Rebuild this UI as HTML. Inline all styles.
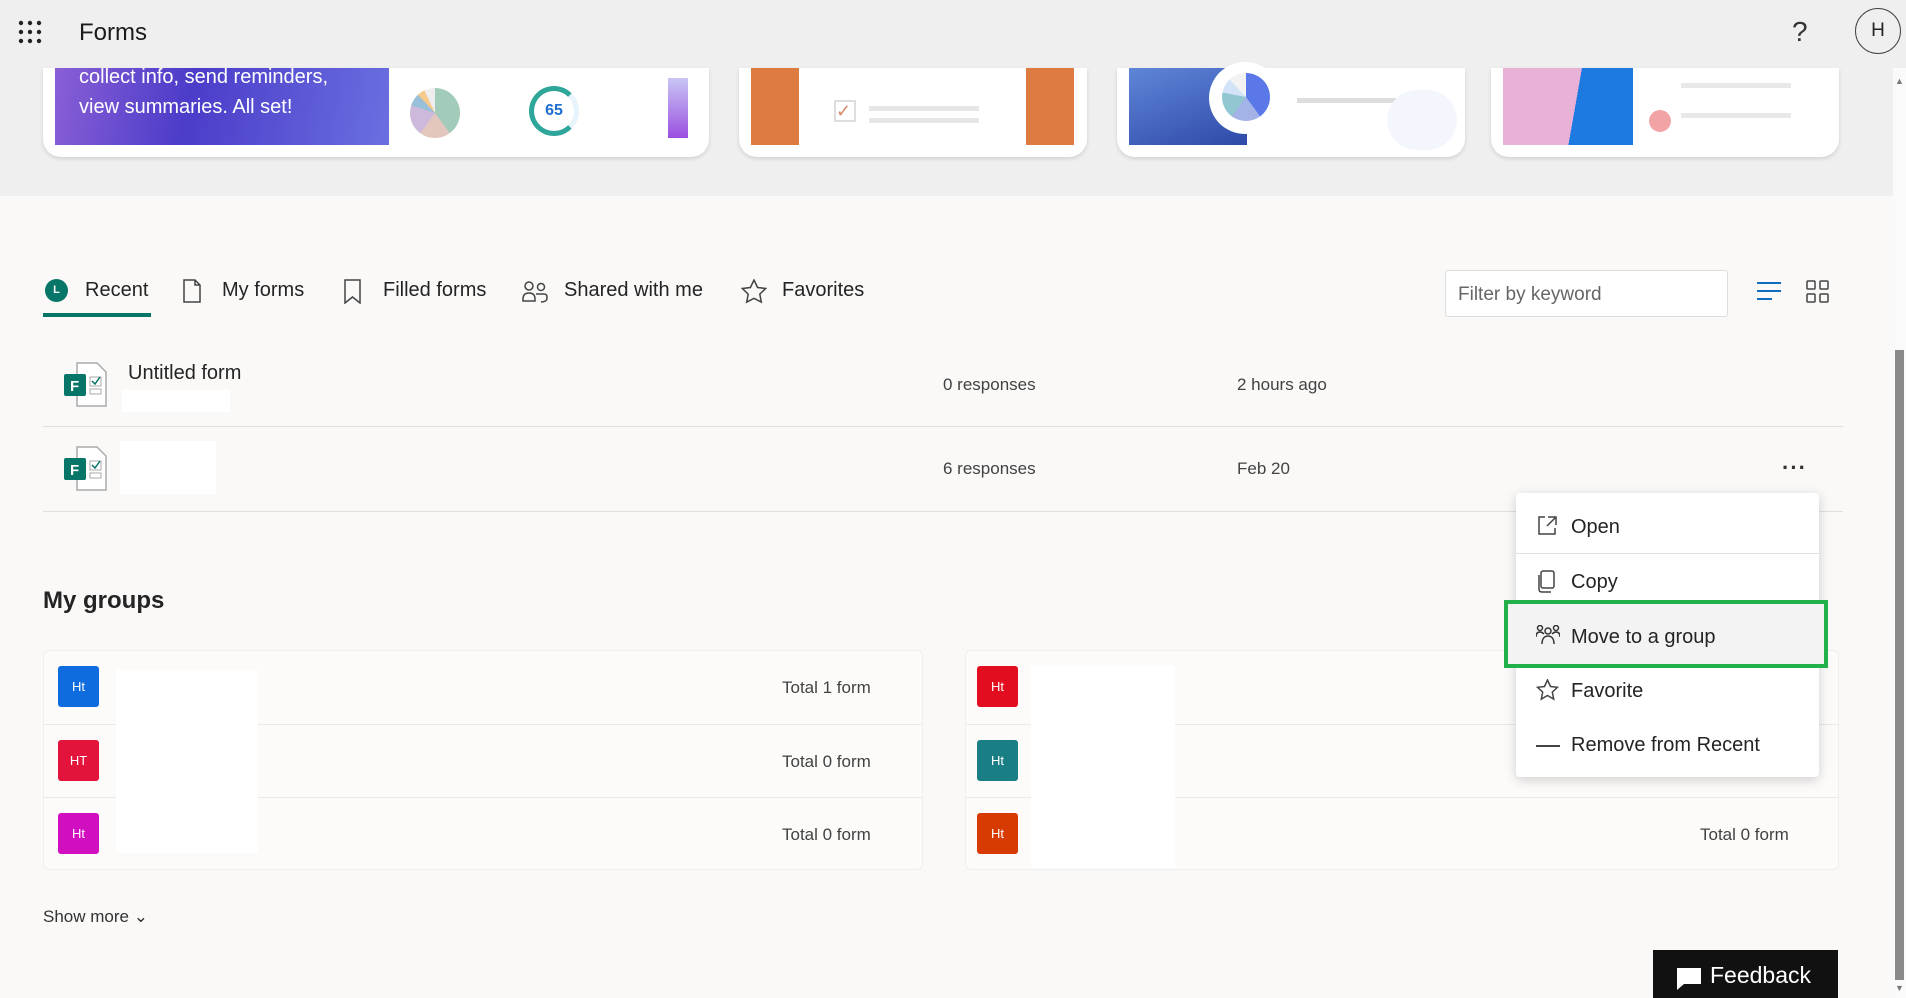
<!DOCTYPE html>
<html><head><style>
*{margin:0;padding:0;box-sizing:border-box}
body{width:1906px;height:998px;overflow:hidden;background:#faf9f8;font-family:"Liberation Sans",Arial,sans-serif;color:#242424;position:relative}
.a{position:absolute}
.hdr{left:0;top:0;width:1906px;height:196px;background:#efefef}
.card{background:#fff;border-radius:0 0 18px 18px;box-shadow:0 2px 4px rgba(0,0,0,.12);top:68px;height:89px}
.inner{position:absolute;top:0;height:77px;overflow:hidden}
.t{font-size:20px;top:279px;color:#242424}
.row{font-size:17px;color:#424242}
.grp{background:#fcfbfa;border:1px solid #f0efee;border-radius:6px}
.badge{width:41px;height:41px;border-radius:3px;color:#fff;font-size:13px;text-align:center;line-height:41px}
.mi{left:1571px;font-size:20px;color:#242424}
.ic{left:1536px}
</style></head><body>
<div class="a hdr"></div>
<!-- waffle -->
<svg class="a" style="left:18px;top:20px" width="24" height="24"><g fill="#222"><circle cx="3" cy="3" r="2.2"/><circle cx="12" cy="3" r="2.2"/><circle cx="21" cy="3" r="2.2"/><circle cx="3" cy="12" r="2.2"/><circle cx="12" cy="12" r="2.2"/><circle cx="21" cy="12" r="2.2"/><circle cx="3" cy="21" r="2.2"/><circle cx="12" cy="21" r="2.2"/><circle cx="21" cy="21" r="2.2"/></g></svg>
<div class="a" style="left:79px;top:19px;font-size:24px;color:#1b1b1b">Forms</div>
<div class="a" style="left:1792px;top:16px;font-size:28px;color:#333;font-weight:300">?</div>
<div class="a" style="left:1855px;top:8px;width:46px;height:46px;border:1px solid #444;border-radius:50%;text-align:center;line-height:44px;font-size:19px">H</div>

<div class="a card" style="left:43px;width:666px">
 <div class="inner" style="left:12px;width:334px;background:linear-gradient(100deg,#8a5fd6,#4b3cc9 40%,#6a6fe0)"></div>
 <div class="a" style="left:36px;top:-6px;color:#fff;font-size:20px;line-height:30px">collect info, send reminders,<br>view summaries. All set!</div>
 <div class="a" style="left:367px;top:20px;width:50px;height:50px;border-radius:50%;background:conic-gradient(#a3cbb9 0 40%,#e3c6bd 0 60%,#cdb9dc 0 80%,#98c0d8 0 88%,#f6c98d 0 93%,#eee 0)"></div>
 <div class="a" style="left:486px;top:18px;width:50px;height:50px;border-radius:50%;border:5px solid #2ea69a;border-right-color:#e8f4fb;text-align:center;line-height:40px;color:#1e6fd0;font-size:16px;font-weight:bold">65</div>
 <div class="a" style="left:625px;top:10px;width:20px;height:60px;background:linear-gradient(#c9c6f5,#9a4fe0)"></div>
</div>
<div class="a card" style="left:739px;width:348px">
 <div class="inner" style="left:12px;width:48px;background:#de7b41"></div>
 <div class="inner" style="left:287px;width:48px;background:#de7b41"></div>
 <div class="a" style="left:95px;top:32px;width:22px;height:22px;border:2px solid #ddd;color:#d98a6a;font-size:18px;line-height:18px">✓</div>
 <div class="a" style="left:130px;top:38px;width:110px;height:5px;background:#e6e6e6"></div>
 <div class="a" style="left:130px;top:50px;width:110px;height:5px;background:#e6e6e6"></div>
</div>
<div class="a card" style="left:1117px;width:348px">
 <div class="inner" style="left:12px;width:118px;background:linear-gradient(160deg,#5f86d8,#2f4aa8)"></div>
 <div class="a" style="left:92px;top:-6px;width:72px;height:72px;border-radius:50%;background:#fff"></div>
 <div class="a" style="left:105px;top:5px;width:48px;height:48px;border-radius:50%;background:conic-gradient(#5a78e8 0 40%,#a3b3e8 0 60%,#91c7d1 0 78%,#d2e3f7 0 88%,#f2f2f2 0)"></div>
 <div class="a" style="left:180px;top:30px;width:100px;height:5px;background:#ddd"></div>
 <div class="a" style="left:270px;top:22px;width:70px;height:60px;border-radius:35px;background:#f3f6fd"></div>
</div>
<div class="a card" style="left:1491px;width:348px">
 <div class="inner" style="left:12px;width:130px;background:linear-gradient(100deg,#eab1d6 55%,#1c7ae0 55%)"></div>
 <div class="a" style="left:158px;top:42px;width:22px;height:22px;border-radius:50%;background:#f2a3a3"></div>
 <div class="a" style="left:190px;top:15px;width:110px;height:5px;background:#e8e8e8"></div>
 <div class="a" style="left:190px;top:45px;width:110px;height:5px;background:#e8e8e8"></div>
</div>

<!-- scrollbar -->
<div class="a" style="left:1893px;top:68px;width:13px;height:930px;background:#fafafa"></div>
<div class="a" style="left:1895px;top:350px;width:9px;height:630px;background:#8a8a8a"></div>
<div class="a" style="left:1895px;top:76px;font-size:9px;color:#777">▲</div>
<div class="a" style="left:1895px;top:983px;font-size:9px;color:#777">▼</div>

<!-- tabs -->
<div class="a" style="left:45px;top:279px;width:23px;height:23px;border-radius:50%;background:#077568;color:#fff;font-size:11px;text-align:center;line-height:23px;font-weight:bold">L</div>
<div class="a t" style="left:85px">Recent</div>
<div class="a" style="left:43px;top:313px;width:108px;height:4px;background:#077568"></div>
<svg class="a" style="left:183px;top:279px" width="18" height="24" fill="none" stroke="#444" stroke-width="1.5"><path d="M1 1h11l5 5v17H1z M12 1v5h5"/></svg>
<div class="a t" style="left:222px">My forms</div>
<svg class="a" style="left:344px;top:279px" width="18" height="25" fill="none" stroke="#444" stroke-width="1.5"><path d="M1 1h15v23l-7.5-6L1 24z"/></svg>
<div class="a t" style="left:383px">Filled forms</div>
<svg class="a" style="left:522px;top:281px" width="26" height="22" fill="none" stroke="#444" stroke-width="1.5"><circle cx="7" cy="5" r="4"/><circle cx="19" cy="6" r="3.5"/><path d="M1 18c0-4 2-6 6-6s6 2 6 6v2H1z M14 13h8c2 0 3 1 3 3v1c0 3-3 4-6 4"/></svg>
<div class="a t" style="left:564px">Shared with me</div>
<svg class="a" style="left:741px;top:279px" width="26" height="25" fill="none" stroke="#444" stroke-width="1.5"><path d="M13 1l3.6 7.5 8 1-5.8 5.6 1.5 8L13 19.3 5.7 23.1l1.5-8L1.4 9.5l8-1z"/></svg>
<div class="a t" style="left:782px">Favorites</div>

<div class="a" style="left:1445px;top:270px;width:283px;height:47px;background:#fff;border:1px solid #ddd;border-radius:3px;font-size:19px;color:#666;padding:13px 12px">Filter by keyword</div>
<svg class="a" style="left:1757px;top:281px" width="24" height="20" stroke="#0f6cbd" stroke-width="2"><path d="M0 2h24M0 10h24M0 18h15"/></svg>
<svg class="a" style="left:1806px;top:280px" width="23" height="23" fill="none" stroke="#444" stroke-width="1.5"><rect x="1" y="1" width="8" height="8" rx="1"/><rect x="14" y="1" width="8" height="8" rx="1"/><rect x="1" y="14" width="8" height="8" rx="1"/><rect x="14" y="14" width="8" height="8" rx="1"/></svg>

<!-- rows -->
<svg class="a" style="left:63px;top:362px" width="45" height="45"><path d="M14 1h20l9 9v34H14z" fill="#fff" stroke="#aaa" stroke-width="1.5"/><rect x="1" y="12" width="22" height="22" rx="2" fill="#077568"/><text x="7" y="29" fill="#fff" font-size="15" font-weight="bold" font-family="Liberation Sans">F</text><rect x="27" y="15" width="11" height="9" fill="none" stroke="#aaa"/><path d="M29 19l3 3 5-7" stroke="#077568" fill="none" stroke-width="1.5"/><rect x="27" y="27" width="11" height="5" fill="none" stroke="#aaa"/></svg>
<div class="a" style="left:128px;top:362px;font-size:20px">Untitled form</div>
<div class="a" style="left:122px;top:390px;width:108px;height:22px;background:#fff"></div>
<div class="a row" style="left:943px;top:375px">0 responses</div>
<div class="a row" style="left:1237px;top:375px">2 hours ago</div>
<div class="a" style="left:43px;top:426px;width:1800px;height:1px;background:#e1dfdd"></div>
<svg class="a" style="left:63px;top:446px" width="45" height="45"><path d="M14 1h20l9 9v34H14z" fill="#fff" stroke="#aaa" stroke-width="1.5"/><rect x="1" y="12" width="22" height="22" rx="2" fill="#077568"/><text x="7" y="29" fill="#fff" font-size="15" font-weight="bold" font-family="Liberation Sans">F</text><rect x="27" y="15" width="11" height="9" fill="none" stroke="#aaa"/><path d="M29 19l3 3 5-7" stroke="#077568" fill="none" stroke-width="1.5"/><rect x="27" y="27" width="11" height="5" fill="none" stroke="#aaa"/></svg>
<div class="a" style="left:120px;top:441px;width:96px;height:53px;background:#fff"></div>
<div class="a row" style="left:943px;top:459px">6 responses</div>
<div class="a row" style="left:1237px;top:459px">Feb 20</div>
<div class="a" style="left:1782px;top:455px;font-size:22px;font-weight:bold;color:#333;letter-spacing:1px">···</div>
<div class="a" style="left:43px;top:511px;width:1800px;height:1px;background:#e1dfdd"></div>

<div class="a" style="left:43px;top:587px;font-size:24px;font-weight:bold;color:#242424">My groups</div>
<div class="a grp" style="left:43px;top:650px;width:880px;height:220px"></div>
<div class="a" style="left:43px;top:724px;width:880px;height:1px;background:#ebe9e7"></div>
<div class="a" style="left:43px;top:797px;width:880px;height:1px;background:#ebe9e7"></div>
<div class="a grp" style="left:965px;top:650px;width:874px;height:220px"></div>
<div class="a" style="left:965px;top:724px;width:874px;height:1px;background:#ebe9e7"></div>
<div class="a" style="left:965px;top:797px;width:874px;height:1px;background:#ebe9e7"></div>
<div class="a badge" style="left:58px;top:666px;background:#0f6cdf">Ht</div>
<div class="a badge" style="left:58px;top:740px;background:#e3143c">HT</div>
<div class="a badge" style="left:58px;top:813px;background:#d20fc0">Ht</div>
<div class="a" style="left:116px;top:670px;width:142px;height:183px;background:#fff"></div>
<div class="a row" style="left:782px;top:678px">Total 1 form</div>
<div class="a row" style="left:782px;top:752px">Total 0 form</div>
<div class="a row" style="left:782px;top:825px">Total 0 form</div>
<div class="a badge" style="left:977px;top:666px;background:#e20d1f">Ht</div>
<div class="a badge" style="left:977px;top:740px;background:#1a7f85">Ht</div>
<div class="a badge" style="left:977px;top:813px;background:#d83b01">Ht</div>
<div class="a" style="left:1031px;top:666px;width:144px;height:202px;background:#fff"></div>
<div class="a row" style="left:1700px;top:825px">Total 0 form</div>
<div class="a" style="left:43px;top:907px;font-size:17px;color:#333">Show more ⌄</div>

<div class="a" style="left:1653px;top:950px;width:185px;height:48px;background:#111;color:#fff;font-size:23px;padding:12px 0 0 57px">Feedback</div>
<svg class="a" style="left:1677px;top:968px" width="24" height="22"><path d="M0 0h24v16H7l-7 6z" fill="#fff"/></svg>

<!-- menu -->
<div class="a" style="left:1516px;top:493px;width:303px;height:284px;background:#fff;border-radius:4px;box-shadow:0 3px 12px rgba(0,0,0,.18)"></div>
<div class="a" style="left:1516px;top:553px;width:303px;height:1px;background:#e1dfdd"></div>
<div class="a" style="left:1508px;top:604px;width:316px;height:60px;background:#f3f3f3"></div>
<div class="a" style="left:1504px;top:600px;width:324px;height:68px;border:4px solid #22b04b"></div>
<svg class="a ic" style="top:515px" width="22" height="22" fill="none" stroke="#444" stroke-width="1.5"><path d="M9 2H3v17h16v-6 M12 2h8v8 M20 2l-9 9"/></svg>
<div class="a mi" style="top:516px">Open</div>
<svg class="a ic" style="top:570px" width="22" height="24" fill="none" stroke="#444" stroke-width="1.5"><rect x="5" y="1" width="13" height="17" rx="2"/><path d="M3 5v14c0 2 1 3 3 3h9"/></svg>
<div class="a mi" style="top:571px">Copy</div>
<svg class="a ic" style="top:625px" width="24" height="20" fill="none" stroke="#333" stroke-width="1.5"><circle cx="4" cy="3" r="2.5"/><circle cx="20" cy="3" r="2.5"/><circle cx="12" cy="6" r="3"/><path d="M0 12c0-4 2-5 4-5s3 1 4 2 M24 12c0-4-2-5-4-5s-3 1-4 2 M6 19c0-6 3-8 6-8s6 2 6 8"/></svg>
<div class="a mi" style="top:626px">Move to a group</div>
<svg class="a ic" style="top:679px" width="23" height="22" fill="none" stroke="#444" stroke-width="1.5"><path d="M11.5 1l3 6.5 7 .8-5.2 4.8 1.4 7-6.2-3.6-6.2 3.6 1.4-7L1.5 8.3l7-.8z"/></svg>
<div class="a mi" style="top:680px">Favorite</div>
<div class="a ic" style="top:745px;width:24px;height:2px;background:#444"></div>
<div class="a mi" style="top:734px">Remove from Recent</div>
</body></html>
